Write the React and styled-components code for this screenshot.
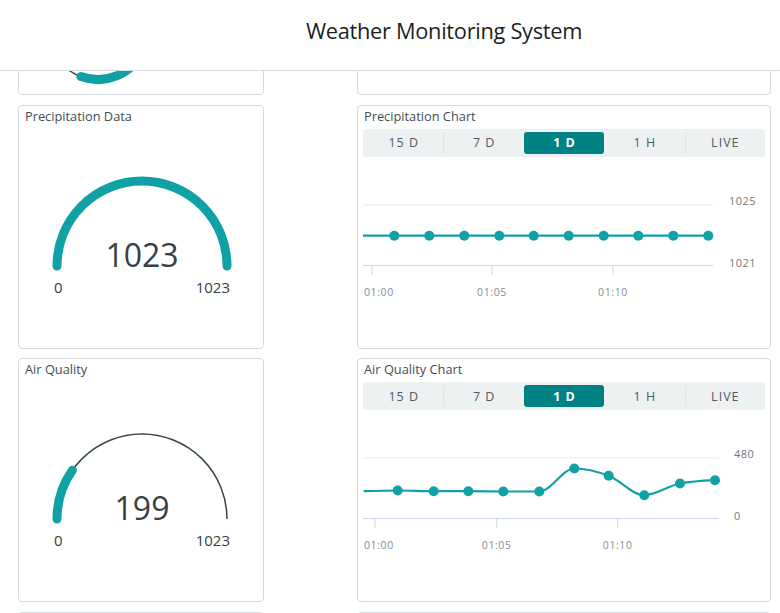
import React, { useLayoutEffect, useRef } from "react";
import styled, { createGlobalStyle } from "styled-components";

const GlobalStyle = createGlobalStyle`
  html, body { margin: 0; padding: 0; background: #ffffff; }
  body { font-family: "Open Sans", "Liberation Sans", sans-serif; color: #37474f; }
  * { box-sizing: border-box; }
`;

const TEAL = "#10a1a5";
const DARK = "#37474f";

const Page = styled.div`
  display: flex;
  flex-direction: column;
  height: 100vh;
  overflow: hidden;
`;

const Header = styled.header`
  flex: 0 0 71px;
  display: flex;
  align-items: center;
  justify-content: center;
  padding: 0 0 9px 108px;
  border-bottom: 1px solid #d6dcde;
  background: #ffffff;
`;

const Title = styled.h1`
  margin: 0;
  font-family: "Open Sans", "Liberation Sans", sans-serif;
  font-weight: 400;
  font-size: 21.8px;
  letter-spacing: -0.3px;
  color: #1b1f21;
`;

const Main = styled.main`
  flex: 1;
  overflow-y: auto;
  scrollbar-width: none;
  &::-webkit-scrollbar { display: none; }
`;

const Grid = styled.div`
  display: grid;
  grid-template-columns: 246px 414px;
  column-gap: 93px;
  row-gap: 9.5px;
  padding: 10px 9px 10px 18px;
`;

const Card = styled.section`
  height: 244px;
  border: 1px solid #d5dbdc;
  border-radius: 4px;
  background: #ffffff;
  padding: 4px 5px 0 5px;
  display: flex;
  flex-direction: column;
`;

const CardTitle = styled.h2`
  margin: 0;
  height: 16px;
  font-size: 12.8px;
  line-height: 12px;
  font-weight: 400;
  color: #434e54;
  padding-left: 1px;
`;

const GaugeSvg = styled.svg`
  display: block;
  margin: 0 -5px;
`;

const TabBar = styled.div`
  display: flex;
  height: 28px;
  margin-top: 3px;
  background: #edf1f2;
  border-radius: 3px;
  padding: 3px 0;
`;

const Tab = styled.div`
  flex: 1;
  display: flex;
  align-items: center;
  justify-content: center;
  font-size: 12.5px;
  letter-spacing: 1px;
  border-radius: 3px;
  color: ${(p) => (p.$active ? "#ffffff" : "#4f5b61")};
  background: ${(p) => (p.$active ? "#008184" : "transparent")};
  font-weight: ${(p) => (p.$active ? 700 : 400)};
  border-left: 1px solid ${(p) => (p.$sep ? "#dde3e5" : "transparent")};
`;

const ChartSvg = styled.svg`
  display: block;
  overflow: visible;
`;

function arcPath(cx, cy, r, a0, a1) {
  const p = (a) => [cx + r * Math.cos((a * Math.PI) / 180), cy - r * Math.sin((a * Math.PI) / 180)];
  const [x0, y0] = p(a0);
  const [x1, y1] = p(a1);
  const large = Math.abs(a0 - a1) > 180 ? 1 : 0;
  const sweep = a0 > a1 ? 1 : 0;
  return `M ${x0} ${y0} A ${r} ${r} 0 ${large} ${sweep} ${x1} ${y1}`;
}

function Gauge({ value, min, max }) {
  const cx = 123;
  const cy = 140;
  const r = 85;
  const frac = (value - min) / (max - min);
  const endA = 180 - 180 * frac;
  return (
    <GaugeSvg width="246" height="220" viewBox="0 0 246 220">
      {frac < 1 && <path d={arcPath(cx, cy, r, 180, 0)} fill="none" stroke={DARK} strokeWidth="1.5" />}
      <path d={arcPath(cx, cy, r, 180, endA)} fill="none" stroke={TEAL} strokeWidth="9" strokeLinecap="round" />
      <text x={cx} y={cy + 1} textAnchor="middle" fontSize="32" fill="#364146" fontFamily="Open Sans, sans-serif">
        {value}
      </text>
      <text x="35" y={cy + 27} fontSize="15" fill="#364146" fontFamily="Open Sans, sans-serif">
        {min}
      </text>
      <text x="211" y={cy + 27} textAnchor="end" fontSize="15" fill="#364146" fontFamily="Open Sans, sans-serif">
        {max}
      </text>
    </GaugeSvg>
  );
}

function Ring() {
  const cx = 79;
  const cy = 157.5;
  const r = 50;
  const pt = (a) => [cx + r * Math.cos((a * Math.PI) / 180), cy + r * Math.sin((a * Math.PI) / 180)];
  const [ax, ay] = pt(110);
  const [bx, by] = pt(-60);
  return (
    <GaugeSvg width="246" height="220" viewBox="0 0 246 220">
      <circle cx={cx} cy={cy} r={r} fill="none" stroke={DARK} strokeWidth="1.5" />
      <path d={`M ${ax} ${ay} A ${r} ${r} 0 0 0 ${bx} ${by}`} fill="none" stroke={TEAL} strokeWidth="9" strokeLinecap="round" />
    </GaugeSvg>
  );
}

function monotonePath(pts) {
  const n = pts.length;
  const sign = (v) => (v < 0 ? -1 : 1);
  const t = new Array(n).fill(0);
  for (let i = 1; i < n - 1; i++) {
    const [x0, y0] = pts[i - 1];
    const [x1, y1] = pts[i];
    const [x2, y2] = pts[i + 1];
    const h0 = x1 - x0, h1 = x2 - x1;
    const s0 = (y1 - y0) / h0, s1 = (y2 - y1) / h1;
    const p = (s0 * h1 + s1 * h0) / (h0 + h1);
    t[i] = (sign(s0) + sign(s1)) * Math.min(Math.abs(s0), Math.abs(s1), 0.5 * Math.abs(p)) || 0;
  }
  const s2 = (a, b, tt) => {
    const h = b[0] - a[0];
    return h ? (3 * (b[1] - a[1]) / h - tt) / 2 : tt;
  };
  if (n > 2) {
    t[0] = s2(pts[0], pts[1], t[1]);
    t[n - 1] = s2(pts[n - 2], pts[n - 1], t[n - 2]);
  }
  let d = `M ${pts[0][0]} ${pts[0][1]}`;
  for (let i = 0; i < n - 1; i++) {
    const [x0, y0] = pts[i];
    const [x1, y1] = pts[i + 1];
    const dx = (x1 - x0) / 3;
    d += ` C ${x0 + dx} ${y0 + dx * t[i]} ${x1 - dx} ${y1 - dx * t[i + 1]} ${x1} ${y1}`;
  }
  return d;
}

function LineChart({ start, points, ticks, topLabel, bottomLabel, gridEnd, labelX }) {
  const all = [start, ...points];
  return (
    <ChartSvg width="403" height="185" viewBox="0 0 403 185">
      <line x1="0" y1="48" x2={gridEnd} y2="48" stroke="#e6eaeb" strokeWidth="1" />
      <line x1="0" y1="108.5" x2={gridEnd} y2="108.5" stroke="#cdd6ea" strokeWidth="1" />
      {ticks.map((tx) => (
        <line key={tx} x1={tx} y1="109" x2={tx} y2="118" stroke="#cdd6ea" strokeWidth="1" />
      ))}
      <text x={labelX} y="47.5" fontSize="11" fill="#6f7a7f" letterSpacing="0.5" fontFamily="Open Sans, sans-serif">
        {topLabel}
      </text>
      <text x={labelX} y="109.5" fontSize="11" fill="#6f7a7f" letterSpacing="0.5" fontFamily="Open Sans, sans-serif">
        {bottomLabel}
      </text>
      {["01:00", "01:05", "01:10"].map((lbl, i) => (
        <text
          key={lbl}
          x={i === 0 ? 1 : ticks[i]}
          y="139"
          textAnchor={i === 0 ? "start" : "middle"}
          fontSize="10.5"
          fill="#848e92"
          letterSpacing="0.6"
          fontFamily="Open Sans, sans-serif"
        >
          {lbl}
        </text>
      ))}
      <path d={monotonePath(all)} fill="none" stroke={TEAL} strokeWidth="2.2" />
      {points.map(([x, y]) => (
        <circle key={x} cx={x} cy={y} r="5" fill={TEAL} />
      ))}
    </ChartSvg>
  );
}

function Tabs() {
  const tabs = ["15 D", "7 D", "1 D", "1 H", "LIVE"];
  const active = 2;
  return (
    <TabBar>
      {tabs.map((t, i) => (
        <Tab key={t} $active={i === active} $sep={i > 0 && i !== active && i !== active + 1}>
          {t}
        </Tab>
      ))}
    </TabBar>
  );
}

const precipPoints = [31.3, 66.3, 101.3, 136.3, 170.7, 205.7, 240.7, 275.3, 310.3, 345.3].map((x) => [x, 78.7]);

const airPoints = [
  [34.7, 80.5],
  [70.7, 81.2],
  [105.3, 81.2],
  [140.3, 81.5],
  [176.3, 81.5],
  [211.3, 58.5],
  [245.7, 65.8],
  [281.3, 85.2],
  [317, 73.5],
  [352, 70.2],
];

export default function App() {
  const mainRef = useRef(null);
  useLayoutEffect(() => {
    if (mainRef.current) mainRef.current.scrollTop = 230;
  }, []);
  return (
    <Page>
      <GlobalStyle />
      <Header>
        <Title>Weather Monitoring System</Title>
      </Header>
      <Main ref={mainRef}>
        <Grid>
          <Card>
            <CardTitle>Humidity</CardTitle>
            <Ring />
          </Card>
          <Card>
            <CardTitle>Humidity Chart</CardTitle>
            <Tabs />
          </Card>

          <Card>
            <CardTitle>Precipitation Data</CardTitle>
            <Gauge value={1023} min={0} max={1023} />
          </Card>
          <Card>
            <CardTitle>Precipitation Chart</CardTitle>
            <Tabs />
            <LineChart
              start={[0, 78.7]}
              points={precipPoints}
              ticks={[9, 129, 250]}
              topLabel="1025"
              bottomLabel="1021"
              gridEnd={350}
              labelX={366}
            />
          </Card>

          <Card>
            <CardTitle>Air Quality</CardTitle>
            <Gauge value={199} min={0} max={1023} />
          </Card>
          <Card>
            <CardTitle>Air Quality Chart</CardTitle>
            <Tabs />
            <LineChart
              start={[0.7, 81.2]}
              points={airPoints}
              ticks={[12, 133.7, 254.7]}
              topLabel="480"
              bottomLabel="0"
              gridEnd={356}
              labelX={371}
            />
          </Card>

          <Card>
            <CardTitle>Temperature</CardTitle>
          </Card>
          <Card>
            <CardTitle>Temperature Chart</CardTitle>
          </Card>
        </Grid>
      </Main>
    </Page>
  );
}
